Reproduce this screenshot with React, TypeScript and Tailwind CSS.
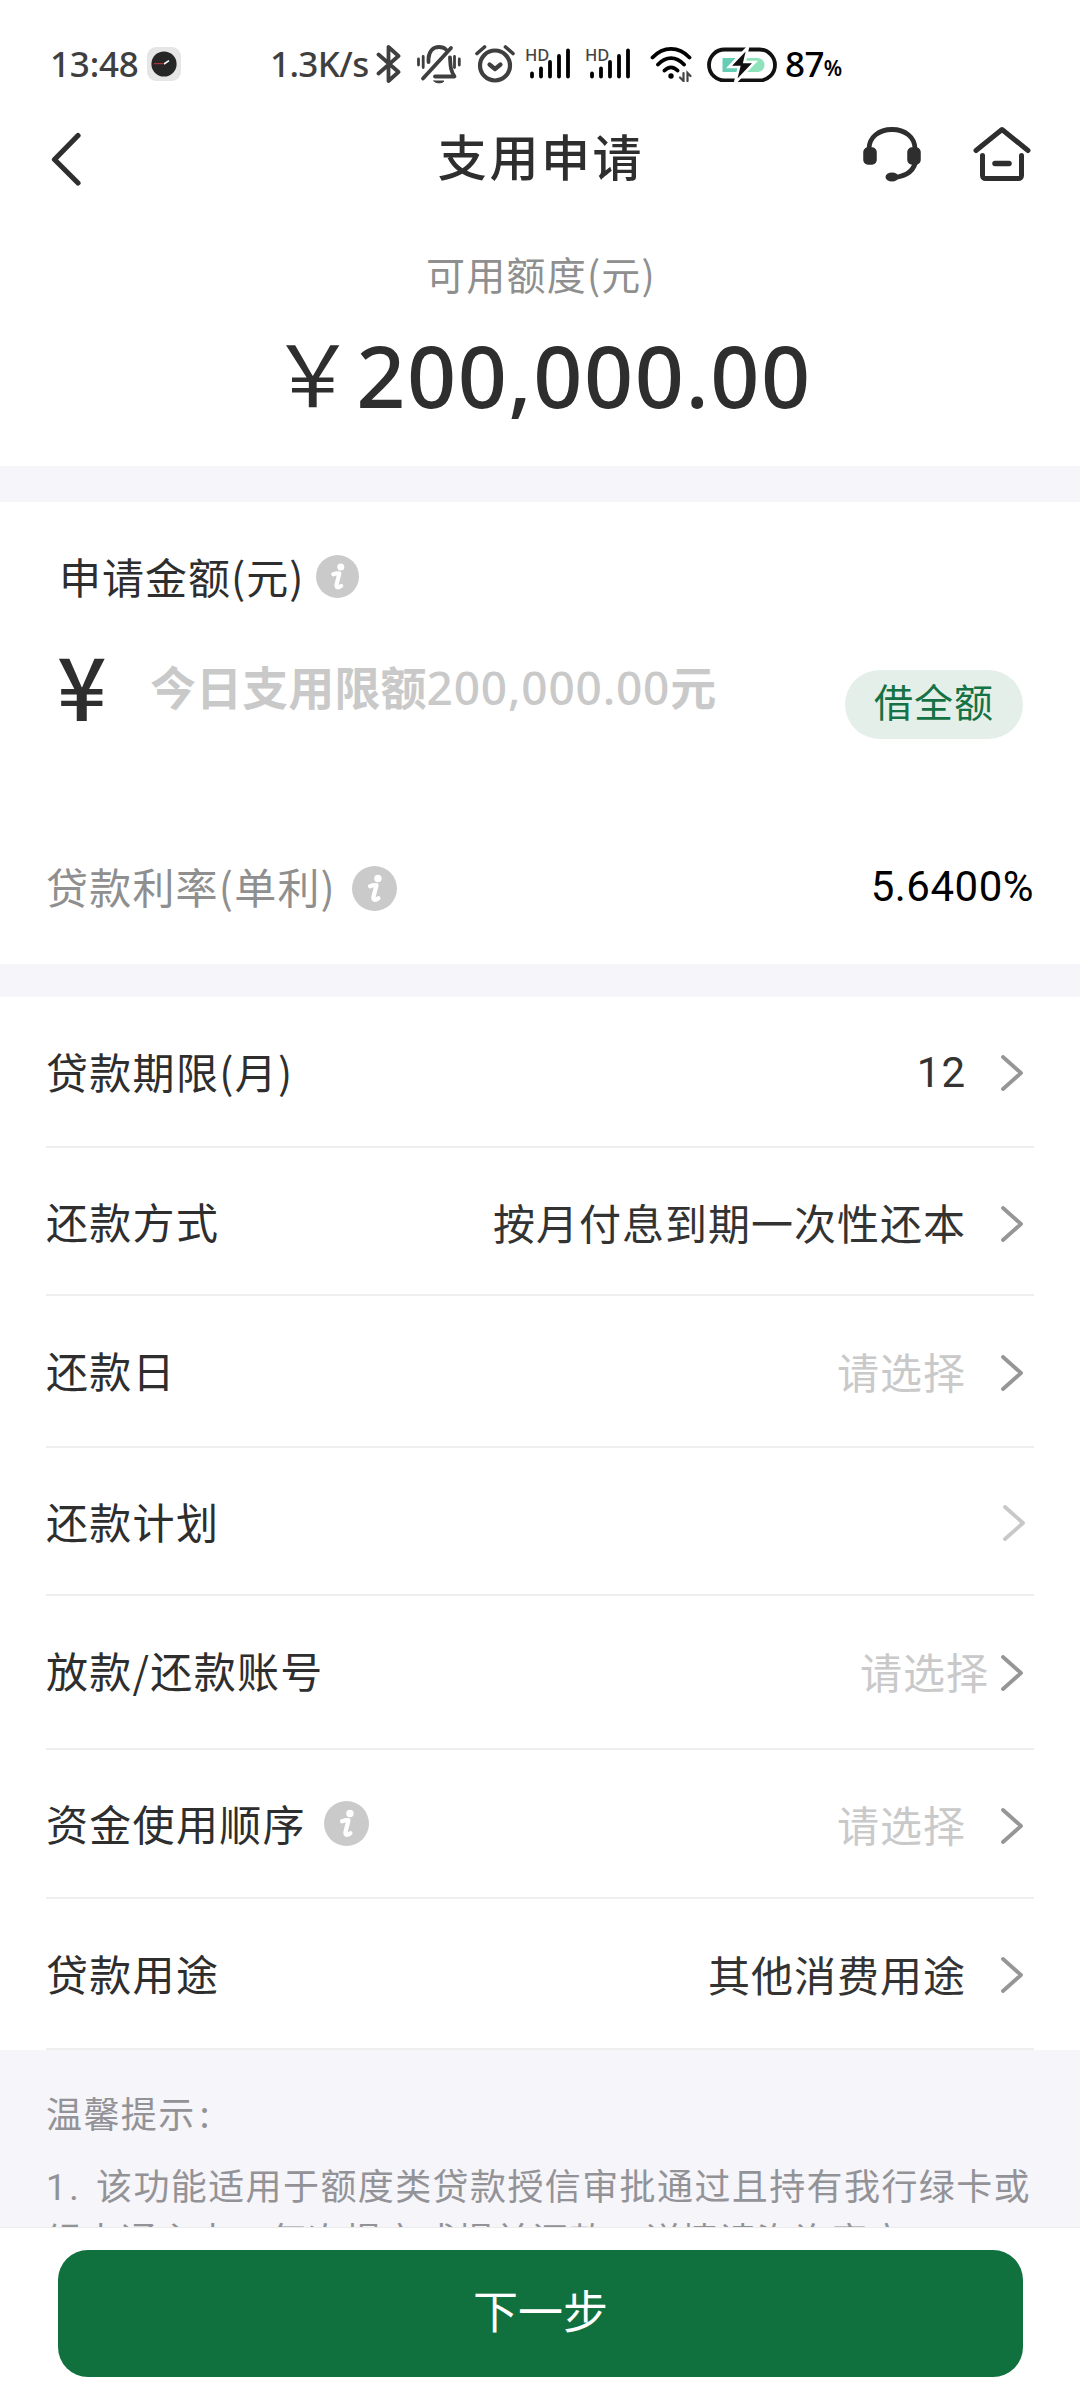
import type { ReactNode } from "react";

type Row = {
  label: string;
  value?: string;
  placeholder?: boolean;
  info?: boolean;
  size: string;
  valueGap?: string;
  arrow?: string;
};

const rows: Row[] = [
  { label: "贷款期限(月)", value: "12", size: "h-[151px] pt-[3px]" },
  { label: "还款方式", value: "按月付息到期一次性还本", size: "h-[148px] pt-[5px]" },
  { label: "还款日", value: "请选择", placeholder: true, size: "h-[152px] pt-[3px]" },
  { label: "还款计划", size: "h-[148px] pt-[5px]", arrow: "mr-[9px] mb-[2px] text-[#c8c8c8]" },
  { label: "放款/还款账号", value: "请选择", placeholder: true, size: "h-[154px] pt-[1px]", valueGap: "mr-[12px]" },
  { label: "资金使用顺序", value: "请选择", placeholder: true, info: true, size: "h-[149px] pt-[4px]" },
  { label: "贷款用途", value: "其他消费用途", size: "h-[151px] pt-[3px]" },
];

function InfoIcon({ className }: { className: string }) {
  return (
    <svg viewBox="0 0 46 46" className={className}>
      <circle cx="23" cy="23" r="23" fill="#cacaca" />
      <circle cx="26.5" cy="12.8" r="3.8" fill="#fff" />
      <path d="M18.5 20.6C21 19.6 23 19.4 25 19.6L22 31.5C21.5 35.5 24 35.2 27 33" fill="none" stroke="#fff" strokeWidth="4.4" strokeLinecap="round" strokeLinejoin="round" />
    </svg>
  );
}

function Chevron({ className }: { className: string }) {
  return (
    <svg viewBox="0 0 22 36" className={`w-[22px] h-[36px] ${className}`} fill="none" stroke="currentColor" strokeWidth={3.8} strokeLinecap="round" strokeLinejoin="round">
      <path d="M2 2l18 16L2 34" />
    </svg>
  );
}

function Signal({ className }: { className: string }) {
  return (
    <div className={`relative w-[45px] h-[36px] ${className}`}>
      <svg viewBox="0 0 45 32" className="w-[45px] h-[32px] mt-[2px]">
        <g stroke="#000" strokeWidth="3.8" strokeLinecap="round">
          <path d="M6 25.5v3M15 20.5v8M24 14v14.5M33 8v20.5M42 2.5v26" />
        </g>
      </svg>
      <span className="absolute left-[-1px] top-[-3px] text-[16.5px] leading-[24px] text-[#444]">HD</span>
    </div>
  );
}

function StatusBar() {
  return (
    <div className="flex items-center h-[128px] pl-[50px] font-['Noto_Sans',sans-serif] text-[35px] font-medium text-[#3f3f3f]">
      <span className="w-[97px] tracking-[-0.2px]">13:48</span>
      <div className="w-[34px] h-[34px] rounded-[9px] bg-[#e6e6e6] flex items-center justify-center">
        <svg viewBox="0 0 26 26" className="w-[26px] h-[26px]">
          <circle cx="13" cy="13" r="12.6" fill="#262626" />
          <path d="M3 12.6h9" stroke="#a33" strokeWidth="1.2" />
          <path d="M13 13l5-3.4" stroke="#fff" strokeWidth="1.6" />
        </svg>
      </div>
      <span className="ml-[89px] w-[106px] tracking-[-0.6px]">1.3K/s</span>
      <svg viewBox="0 0 26 40" className="w-[26px] h-[40px]" fill="none" stroke="#3f3f3f" strokeWidth={3.8} strokeLinecap="round" strokeLinejoin="round">
        <path d="M2.5 10.5l20 17.5L12.5 37V3l10 9-20 17.5" />
      </svg>
      <svg viewBox="0 0 46 40" className="w-[46px] h-[40px] ml-[14px]" fill="none" stroke="#3f3f3f" strokeWidth={3.2} strokeLinecap="round" strokeLinejoin="round">
        <path d="M2.5 15v6M7.2 12.5v11M38.5 12.5v11M43.3 15v6" strokeWidth="2.8" />
        <path d="M35 4L7 34.5" strokeWidth="3.8" />
        <path d="M12.5 18v-3.5C13 7 17 3 23 3c3 0 5.5 1 7 2.5M34 13.5c.5 9 .5 13 4.5 19H19" strokeWidth="3.8" />
        <path d="M18 37h10c-1.5 2.5-8.5 2.5-10 0z" fill="#3f3f3f" strokeWidth="1" />
      </svg>
      <svg viewBox="0 0 42 40" className="w-[42px] h-[40px] ml-[12px]" fill="none" stroke="#3f3f3f" strokeWidth={4.2} strokeLinecap="round" strokeLinejoin="round">
        <circle cx="21" cy="21.5" r="15" />
        <path d="M3 9.5L10.5 3M39 9.5L31.5 3" strokeWidth="3.6" />
        <path d="M15.5 20.5l5.5 4.5 5.5-4.5" />
      </svg>
      <Signal className="ml-[10px]" />
      <Signal className="ml-[15px]" />
      <svg viewBox="0 0 42 36" className="w-[42px] h-[36px] ml-[19px]" fill="none" stroke="#000" strokeWidth={3.8} strokeLinecap="round">
        <path d="M2.5 11.5C13.5 0 28.5 0 39.5 11.5M8 18.5c8-8.5 18-8.5 26 0M14.5 24.5c4-4.3 9-4.3 13 0" />
        <circle cx="21" cy="30" r="2.7" fill="#000" stroke="none" />
        <path d="M33.5 27v8L30 31.5M37.5 35v-8l3 3" stroke="#444" strokeWidth="2.2" />
      </svg>
      <svg viewBox="0 0 70 36" className="w-[70px] h-[36px] ml-[15px]">
        <rect x="2" y="3.5" width="66" height="31" rx="15.5" fill="#fff" stroke="#111" strokeWidth="3.8" />
        <path d="M15.5 12h22l-7 14h-15z" fill="#66cdb5" />
        <path d="M40 12h10c10 0 10 14 0 14H33z" fill="#8fe3bb" />
        <path d="M41 1L22 21h10l-4 16 20-21H37.5z" fill="#111" stroke="#fff" strokeWidth="2.6" />
      </svg>
      <span className="ml-[8px] tracking-[-0.6px] text-black">87</span>
      <span className="text-[21px] text-black font-semibold pt-[9px]">%</span>
    </div>
  );
}

function NavBar() {
  return (
    <div className="relative flex items-center justify-between h-[62px] pl-[50px] pr-[48px] text-[#2e2e2e]">
      <svg viewBox="0 0 32 54" className="w-[32px] h-[54px]" fill="none" stroke="currentColor" strokeWidth={5.2} strokeLinecap="round" strokeLinejoin="round">
        <path d="M28 3.5L4.5 27.5 28 51" />
      </svg>
      <h1 className="absolute inset-x-0 top-[-4px] pl-[2px] text-center text-[49px] leading-[62px] font-medium tracking-[2.6px]">支用申请</h1>
      <div className="flex items-center gap-[50px] pb-[11px]">
        <svg viewBox="0 0 60 56" className="w-[60px] h-[56px]" fill="none" stroke="currentColor" strokeWidth={4.8} strokeLinecap="round">
          <path d="M7 23C7 11 17 3.5 30 3.5S53 11 53 23M54 33C53 43 46 50 32 51.5" />
          <rect x="2" y="22" width="12" height="16" rx="4" fill="currentColor" stroke="currentColor" strokeWidth="1.5" />
          <rect x="46" y="22" width="12" height="16" rx="4" fill="currentColor" stroke="currentColor" strokeWidth="1.5" />
          <ellipse cx="30" cy="51" rx="6.5" ry="4.5" fill="currentColor" stroke="none" />
        </svg>
        <svg viewBox="0 0 60 56" className="w-[60px] h-[56px]" fill="none" stroke="currentColor" strokeWidth={5} strokeLinecap="round" strokeLinejoin="round">
          <path d="M4 24.5L30 3.5l26 21M10.5 29.5v20a3 3 0 0 0 3 3h33a3 3 0 0 0 3-3v-20" />
          <path d="M23 37.5h14" strokeWidth="5.5" />
        </svg>
      </div>
    </div>
  );
}

function ListRow({ row, children }: { row: Row; children?: ReactNode }) {
  return (
    <div className={`flex items-center justify-between mx-[46px] border-b-2 border-[#efefef] ${row.size}`}>
      <div className="flex items-center pb-[5px] tracking-[1.3px]">
        <span>{row.label}</span>
        {children}
      </div>
      <div className="flex items-center">
        {row.value && (
          <span
            className={`${row.placeholder ? "text-[#c9c9c9]" : "text-[#333]"} ${row.value === "12" ? "font-[Roboto,sans-serif]" : "pb-[3px]"} ${row.valueGap ?? "mr-[35px]"}`}
          >
            {row.value}
          </span>
        )}
        <Chevron className={row.arrow ?? "mr-[11px] text-[#969696]"} />
      </div>
    </div>
  );
}

export default function App() {
  return (
    <div className="w-[1080px] h-[2400px] overflow-hidden flex flex-col bg-white text-[#2e2e2e] font-['Noto_Sans_CJK_SC',sans-serif]">
      <StatusBar />
      <NavBar />

      {/* Available credit */}
      <section className="h-[276px] flex flex-col items-center pt-[54px]">
        <p className="text-[39px] leading-[58px] tracking-[1.2px] pl-[2px] text-[#8f8f8f]">可用额度(元)</p>
        <div className="flex items-center mt-[18px] h-[110px] pl-[5px]">
          <span className="text-[85px] leading-[110px] w-[86px] pb-[10px] -ml-[3px]">￥</span>
          <span className="font-['Noto_Sans',sans-serif] text-[86px] leading-[110px] font-medium tracking-[1.5px]">200,000.00</span>
        </div>
      </section>
      <div className="h-[36px] shrink-0 bg-[#f5f5fa]" />

      {/* Amount to borrow */}
      <section className="h-[462px] shrink-0">
        <div className="flex items-center pl-[59px] pt-[43px] text-[42px] leading-[62px] tracking-[1px]">
          <span>申请金额(元)</span>
          <InfoIcon className="w-[43px] h-[43px] ml-[12px]" />
        </div>
        <div className="flex items-start h-[150px] mt-[29px] pl-[57px] pr-[57px]">
          <span className="w-[93px] text-[87px] leading-[110px] font-medium -mt-[8px]">¥</span>
          <p className="flex-1 pt-[15px] text-[46px] leading-[68px] font-bold tracking-[0.1px] text-[#c9c9c9] whitespace-nowrap">
            今日支用限额<span className="font-['Noto_Sans',sans-serif] font-medium tracking-[0.8px]">200,000.00</span>元
          </p>
          <button className="w-[178px] h-[69px] mt-[34px] pb-[9px] rounded-full bg-[#e5efea] text-[#157244] text-[39px] leading-[60px] tracking-[1px]">借全额</button>
        </div>
        <div className="flex items-center justify-between mx-[46px] mt-[70px] h-[64px] text-[42px] tracking-[1px]">
          <div className="flex items-center text-[#8f8f8f] tracking-[1.2px]">
            <span className="pb-[5px]">贷款利率(单利)</span>
            <InfoIcon className="w-[45px] h-[45px] ml-[16px]" />
          </div>
          <span className="font-[Roboto,sans-serif] tracking-[0.5px] text-black pb-[4px]">5.6400%</span>
        </div>
      </section>
      <div className="h-[33px] shrink-0 bg-[#f5f5fa]" />

      {/* Loan terms */}
      <section className="shrink-0 text-[42px] tracking-[1px] leading-[62px]">
        {rows.map((row) => (
          <ListRow key={row.label} row={row}>
            {row.info && <InfoIcon className="w-[45px] h-[45px] ml-[18px]" />}
          </ListRow>
        ))}
      </section>

      <section className="h-[177px] shrink-0 overflow-hidden bg-[#f5f5fa] px-[46px] pt-[34px] text-[36px] leading-[56px] tracking-[1.4px] text-[#939397] whitespace-nowrap">
        <p>
          温馨提示<span className="ml-[4px]">:</span>
        </p>
        <p className="mt-[16px]">
          <span className="inline-block w-[50px] font-[Roboto,sans-serif] tracking-[3px]">1.</span>
          该功能适用于额度类贷款授信审批通过且持有我行绿卡或
        </p>
        <p className="-mt-[6px]">绿卡通主卡，每次提交或提前还款，详情请咨询客户</p>
      </section>

      <div className="grow border-t border-[#ececec] px-[58px] pt-[22px]">
        <button className="w-[965px] h-[127px] rounded-[30px] bg-[#10713f] text-white text-[45px] pb-[8px]">下一步</button>
      </div>
    </div>
  );
}
